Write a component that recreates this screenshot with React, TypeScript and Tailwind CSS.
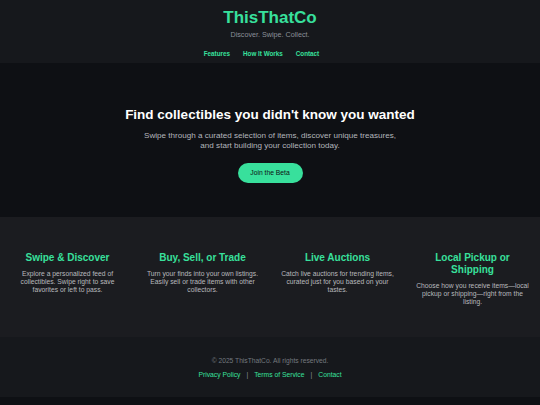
const features = [
  {
    title: "Swipe & Discover",
    text: "Explore a personalized feed of collectibles. Swipe right to save favorites or left to pass.",
  },
  {
    title: "Buy, Sell, or Trade",
    text: "Turn your finds into your own listings. Easily sell or trade items with other collectors.",
  },
  {
    title: "Live Auctions",
    text: "Catch live auctions for trending items, curated just for you based on your tastes.",
  },
  {
    title: "Local Pickup or Shipping",
    text: "Choose how you receive items—local pickup or shipping—right from the listing.",
  },
];

export default function App() {
  return (
    <div className="min-h-screen bg-[#0e1014] font-['Liberation_Sans',Arial,sans-serif] text-white">
      <header className="bg-[#16181c] pt-[8px] h-[63px] text-center">
        <h1 className="text-[17px] leading-[20px] font-bold text-[#38e09c]">ThisThatCo</h1>
        <p className="mt-[2px] text-[7.2px] leading-[9px] text-[#8b9099]">Discover. Swipe. Collect.</p>
        <nav className="mt-[11px] pr-[17px] flex justify-center gap-[13px] text-[6.3px] leading-[8px] font-bold text-[#38e09c]">
          <a href="#features">Features</a>
          <a href="#how">How It Works</a>
          <a href="#contact">Contact</a>
        </nav>
      </header>

      <section className="bg-[#0e1014] h-[154px] pt-[44px] text-center">
        <h2 className="text-[13.5px] leading-[16px] font-bold text-white">
          Find collectibles you didn't know you wanted
        </h2>
        <p className="mx-auto mt-[8px] max-w-[264px] text-[8.1px] leading-[10px] text-[#b3b6bc]">
          Swipe through a curated selection of items, discover unique treasures, and start building your collection today.
        </p>
        <button className="mt-[12px] h-[20px] w-[65px] rounded-full bg-[#38e09c] text-[6.75px] text-[#0e1014]">
          Join the Beta
        </button>
      </section>

      <section id="features" className="bg-[#1b1c20] pt-[35px] h-[120px] grid grid-cols-4">
        {features.map((f) => (
          <div key={f.title} className="px-[9px] text-center">
            <h3 className="text-[10px] leading-[12px] font-bold text-[#38e09c]">{f.title}</h3>
            <p className="mt-[6px] text-[6.75px] leading-[8px] text-[#b8b9bd]">{f.text}</p>
          </div>
        ))}
      </section>

      <footer id="contact" className="bg-[#16181c] h-[60px] pt-[20px] text-center">
        <p className="text-[6.7px] leading-[8px] text-[#74787f]">© 2025 ThisThatCo. All rights reserved.</p>
        <div className="mt-[6px] flex justify-center text-[6.75px] leading-[8px] text-[#38e09c]">
          <a href="#">Privacy Policy</a>
          <span className="mx-[6px] text-[#8b9099]">|</span>
          <a href="#">Terms of Service</a>
          <span className="mx-[6px] text-[#8b9099]">|</span>
          <a href="#">Contact</a>
        </div>
      </footer>
    </div>
  );
}
